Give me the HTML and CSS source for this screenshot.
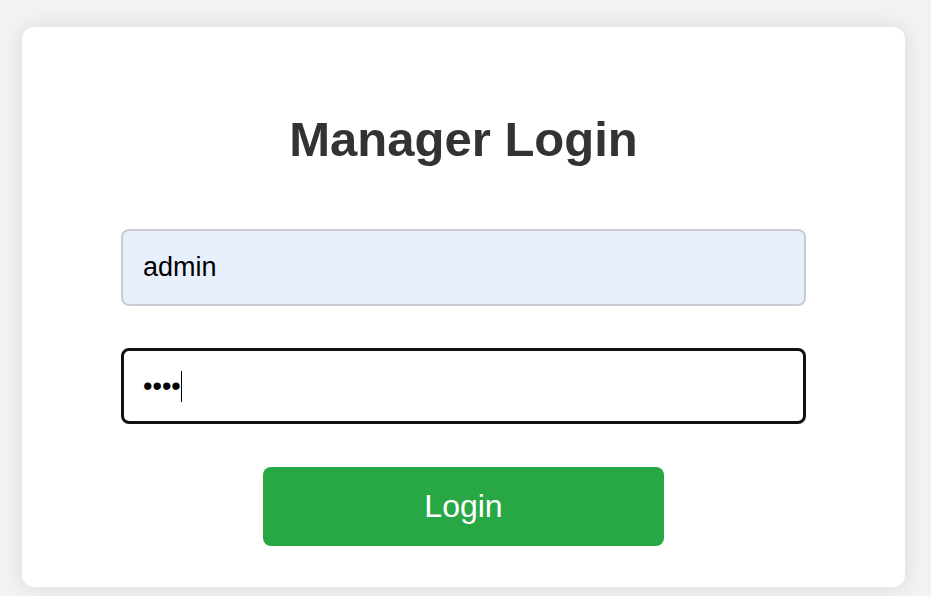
FILE: index.html
```html
<!DOCTYPE html>
<html lang="en">
<head>
<meta charset="utf-8">
<title>Manager Login</title>
<link rel="stylesheet" href="styles.css">
</head>
<body>
  <div class="card">
    <h1 class="title">Manager Login</h1>
    <form class="form">
      <input class="field field-filled" type="text" value="admin">
      <div class="field-wrap">
        <input class="field field-focused" type="password" value="abcd">
        <span class="caret"></span>
      </div>
      <button class="btn" type="button">Login</button>
    </form>
  </div>
</body>
</html>
```
FILE: styles.css
```css
html, body {
  margin: 0;
  padding: 0;
}
body {
  background: #f2f2f2;
  font-family: "Liberation Sans", Arial, sans-serif;
  width: 931px;
  height: 596px;
  overflow: hidden;
}
.card {
  box-sizing: border-box;
  margin: 27px 0 0 22px;
  width: 883px;
  height: 560px;
  background: #fff;
  border-radius: 12px;
  box-shadow: 0 0 20px rgba(0, 0, 0, 0.1);
  padding: 84px 99px 0;
}
.title {
  margin: 0;
  font-size: 49px;
  line-height: 56px;
  font-weight: bold;
  color: #333;
  text-align: center;
}
.form {
  margin-top: 62px;
  display: flex;
  flex-direction: column;
  align-items: center;
}
.field {
  box-sizing: border-box;
  display: block;
  width: 685px;
  height: 77px;
  margin: 0;
  font-family: "Liberation Sans", Arial, sans-serif;
  font-size: 27px;
  color: #000;
  border-radius: 8px;
  outline: none;
}
.field-filled {
  background: #e8f0fe;
  border: 2px solid #cacad2;
  padding: 0 20px;
}
.field-wrap {
  position: relative;
  margin-top: 42px;
}
.field-focused {
  height: 76px;
  background: #fff;
  border: 3px solid #111;
  padding: 0 19px;
}
.caret {
  position: absolute;
  left: 60px;
  top: 23px;
  width: 1px;
  height: 31px;
  background: #000;
}
.btn {
  margin-top: 43px;
  width: 401px;
  height: 79px;
  background: #28a745;
  color: #fff;
  border: none;
  border-radius: 8px;
  font-family: "Liberation Sans", Arial, sans-serif;
  font-size: 32px;
  cursor: pointer;
}
```
